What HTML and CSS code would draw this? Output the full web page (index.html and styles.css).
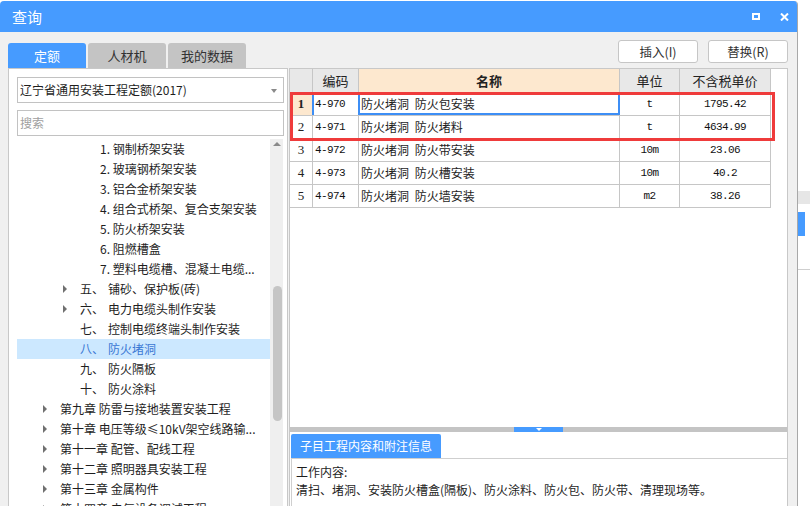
FILE: index.html
```html
<!DOCTYPE html>
<html lang="zh-CN">
<head>
<meta charset="utf-8">
<title>查询</title>
<link rel="stylesheet" href="styles.css">
</head>
<body>
<div class="screen">
  <div class="dialog">
    <div class="titlebar">
      <span class="title">查询</span>
      <div class="win-btns">
        <span class="max"></span>
        <svg class="close" width="9" height="8" viewBox="0 0 9 8"><path d="M1 0.5 L8 7.5 M8 0.5 L1 7.5" stroke="#fff" stroke-width="2"/></svg>
      </div>
    </div>
    <div class="toolbar">
      <div class="tabs">
        <div class="tab active">定额</div>
        <div class="tab">人材机</div>
        <div class="tab">我的数据</div>
      </div>
      <div class="actions">
        <button class="btn">插入(I)</button>
        <button class="btn">替换(R)</button>
      </div>
    </div>
    <div class="main">
      <div class="left">
        <div class="select">辽宁省通用安装工程定额(2017)<span class="caret"></span></div>
        <div class="search">搜索</div>
        <div class="tree-wrap">
          <ul class="tree">
            <li class="l3">1. 钢制桥架安装</li>
            <li class="l3">2. 玻璃钢桥架安装</li>
            <li class="l3">3. 铝合金桥架安装</li>
            <li class="l3">4. 组合式桥架、复合支架安装</li>
            <li class="l3">5. 防火桥架安装</li>
            <li class="l3">6. 阻燃槽盒</li>
            <li class="l3">7. 塑料电缆槽、混凝土电缆...</li>
            <li class="l2"><span class="arrow"></span><span class="num">五、</span>铺砂、保护板(砖)</li>
            <li class="l2"><span class="arrow"></span><span class="num">六、</span>电力电缆头制作安装</li>
            <li class="l2"><span class="noarrow"></span><span class="num">七、</span>控制电缆终端头制作安装</li>
            <li class="l2 selected"><span class="noarrow"></span><span class="num">八、</span>防火堵洞</li>
            <li class="l2"><span class="noarrow"></span><span class="num">九、</span>防火隔板</li>
            <li class="l2"><span class="noarrow"></span><span class="num">十、</span>防火涂料</li>
            <li class="l1"><span class="arrow"></span>第九章 防雷与接地装置安装工程</li>
            <li class="l1"><span class="arrow"></span>第十章 电压等级≤10kV架空线路输...</li>
            <li class="l1"><span class="arrow"></span>第十一章 配管、配线工程</li>
            <li class="l1"><span class="arrow"></span>第十二章 照明器具安装工程</li>
            <li class="l1"><span class="arrow"></span>第十三章 金属构件</li>
            <li class="l1"><span class="arrow"></span>第十四章 电气设备调试工程</li>
          </ul>
          <div class="scrollbar">
            <div class="up"><span></span></div>
            <div class="thumb"></div>
          </div>
        </div>
      </div>
      <div class="right">
        <div class="grid-area">
          <div class="grid">
            <div class="hc"></div>
            <div class="hc">编码</div>
            <div class="hc name-h">名称</div>
            <div class="hc">单位</div>
            <div class="hc">不含税单价</div>

            <div class="rn cur">1</div>
            <div class="c code">4-970</div>
            <div class="c name">防火堵洞 防火包安装</div>
            <div class="c mono center">t</div>
            <div class="c mono center">1795.42</div>

            <div class="rn">2</div>
            <div class="c code">4-971</div>
            <div class="c name">防火堵洞 防火堵料</div>
            <div class="c mono center">t</div>
            <div class="c mono center">4634.99</div>

            <div class="rn">3</div>
            <div class="c code">4-972</div>
            <div class="c name">防火堵洞 防火带安装</div>
            <div class="c mono center">10m</div>
            <div class="c mono center">23.06</div>

            <div class="rn">4</div>
            <div class="c code">4-973</div>
            <div class="c name">防火堵洞 防火槽安装</div>
            <div class="c mono center">10m</div>
            <div class="c mono center">40.2</div>

            <div class="rn">5</div>
            <div class="c code">4-974</div>
            <div class="c name">防火堵洞 防火墙安装</div>
            <div class="c mono center">m2</div>
            <div class="c mono center">38.26</div>
          </div>
          <div class="rowmark"></div>
          <div class="focus"></div>
          <div class="redbox"></div>
        </div>
        <div class="splitter"><span class="grip"><span class="down"></span></span></div>
        <div class="info-tabs"><span class="info-tab">子目工程内容和附注信息</span></div>
        <div class="info">
          <p>工作内容:</p>
          <p>清扫、堵洞、安装防火槽盒(隔板)、防火涂料、防火包、防火带、清理现场等。</p>
        </div>
      </div>
    </div>
  </div>
  <div class="bgapp">
    <div class="bg-head"></div>
    <div class="bg-row"><span class="bg-blue"></span></div>
  </div>
</div>
</body>
</html>
```

FILE: styles.css
```css
* { box-sizing: border-box; margin: 0; padding: 0; }
html, body { width: 810px; height: 506px; overflow: hidden; }
body {
  background: #ffffff;
  font-family: "Noto Sans CJK SC", "Microsoft YaHei", sans-serif;
  font-size: 12px;
  color: #1e1e1e;
}
.screen { display: flex; height: 506px; padding-top: 1px; }

.dialog {
  width: 798px;
  flex: none;
  display: flex;
  flex-direction: column;
  background: #f0f0f0;
  border-right: 1px solid #a8a8a8;
  border-radius: 4px 4px 0 0;
  overflow: hidden;
}

.titlebar {
  height: 31px;
  flex: none;
  background: #469bff;
  color: #fff;
  display: flex;
  align-items: center;
  justify-content: space-between;
  padding: 0 8px 0 12px;
}
.title { font-size: 15px; line-height: 20px; }
.win-btns { display: flex; align-items: center; gap: 20px; }
.max { width: 8px; height: 7px; border: 2px solid #fff; }
.close { display: block; }

.toolbar {
  height: 36px;
  flex: none;
  display: flex;
  justify-content: space-between;
  padding: 0 9px 0 8px;
}
.tabs { display: flex; gap: 2px; align-self: flex-end; }
.tab {
  width: 78px;
  height: 25px;
  line-height: 25px;
  text-align: center;
  font-size: 13px;
  color: #333;
  background: #c4c4c4;
  border-radius: 3px 3px 0 0;
}
.tab.active { background: #469bff; color: #fff; }
.actions { display: flex; gap: 10px; padding-top: 8px; }
.btn {
  width: 80px;
  height: 23px;
  background: #fff;
  border: 1px solid #c6c6c6;
  border-radius: 3px;
  font-family: "Noto Sans CJK SC", sans-serif;
  font-size: 12.5px;
  color: #333;
}

.main {
  flex: 1;
  min-height: 0;
  display: flex;
  gap: 1px;
  padding: 0 9px 0 8px;
}

/* left panel */
.left {
  width: 280px;
  flex: none;
  background: #fff;
  border: 1px solid #c8c8c8;
  border-bottom: none;
  padding: 8px 3px 0 8px;
  display: flex;
  flex-direction: column;
}
.select, .search {
  height: 26px;
  flex: none;
  border: 1px solid #c2c2c2;
  line-height: 24px;
  padding-left: 2px;
  position: relative;
}
.select { color: #1e1e1e; }
.caret {
  position: absolute;
  right: 6px;
  top: 11px;
  border-top: 4px solid #8a8a8a;
  border-left: 3px solid transparent;
  border-right: 3px solid transparent;
}
.search { margin-top: 7px; color: #a0a0a0; }

.tree-wrap { flex: 1; min-height: 0; display: flex; margin-top: 3px; }
.tree { width: 253px; list-style: none; overflow: hidden; }
.tree li {
  height: 20px;
  line-height: 20px;
  white-space: nowrap;
  overflow: hidden;
  display: flex;
  align-items: center;
  color: #1e1e1e;
}
.tree li.l1 { padding-left: 26px; }
.tree li.l2 { padding-left: 46px; }
.tree li.l3 { padding-left: 83px; }
.arrow, .noarrow { width: 17px; flex: none; height: 8px; }
.arrow {
  width: 0;
  margin-right: 13px;
  border-left: 4px solid #707070;
  border-top: 4px solid transparent;
  border-bottom: 4px solid transparent;
}
.num { display: inline-block; width: 28px; flex: none; }
.tree li.selected { background: #cce8ff; color: #3b78d4; }

.scrollbar { width: 13px; flex: none; background: #efefef; }
.up { height: 14px; display: flex; justify-content: center; padding-top: 3px; }
.up span {
  width: 0; height: 0;
  border-bottom: 4px solid #8a8a8a;
  border-left: 4px solid transparent;
  border-right: 4px solid transparent;
}
.thumb {
  width: 9px;
  height: 135px;
  margin: 133px 0 0 3px;
  background: #c5c5c5;
  border-radius: 5px;
}

/* right panel */
.right {
  width: 499px;
  flex: none;
  background: #fff;
  border: 1px solid #c8c8c8;
  border-bottom: none;
  display: flex;
  flex-direction: column;
}
.grid-area { height: 358px; flex: none; position: relative; }
.grid {
  display: grid;
  grid-template-columns: 23px 46px 261px 60px 91px;
  grid-template-rows: 24px;
  grid-auto-rows: 23px;
  width: 481px;
}
.grid > div {
  border-right: 1px solid #c6c6c6;
  border-bottom: 1px solid #c6c6c6;
  white-space: nowrap;
  overflow: hidden;
}
.hc {
  height: 24px;
  background: #e8e8e8;
  text-align: center;
  line-height: 23px;
  font-size: 13px;
  color: #222;
}
.hc.name-h { background: #fde8cf; font-weight: bold; }
.rn {
  text-align: center;
  font-family: "Liberation Serif", serif;
  font-size: 13px;
  line-height: 22px;
  color: #222;
}
.rn.cur { background: #fde8cf; font-weight: bold; }
.c { line-height: 22px; padding-left: 2px; }
.name { font-size: 12px; word-spacing: 3px; }
.code, .mono {
  font-family: "Liberation Mono", monospace;
  font-size: 11px;
  letter-spacing: -0.6px;
  color: #111;
}
.center { text-align: center; padding-left: 0; }

.rowmark {
  position: absolute;
  left: 22px;
  top: 24px;
  width: 2px;
  height: 22px;
  background: #3d8ef5;
}
.focus {
  position: absolute;
  left: 68px;
  top: 23px;
  width: 262px;
  height: 23px;
  border: 2px solid #3d8ef5;
}
.redbox {
  position: absolute;
  left: 0;
  top: 23px;
  width: 485px;
  height: 49px;
  border: 3px solid #ef3b3b;
}

.splitter {
  height: 5px;
  flex: none;
  background: #c4c4c4;
  display: flex;
  justify-content: center;
}
.grip {
  width: 49px;
  height: 5px;
  background: #469bff;
  display: flex;
  justify-content: center;
  padding-top: 1px;
}
.down {
  width: 0; height: 0;
  border-top: 3px solid #fff;
  border-left: 3px solid transparent;
  border-right: 3px solid transparent;
}
.info-tabs { flex: none; padding: 2px 0 0 1px; display: flex; }
.info-tab {
  height: 24px;
  line-height: 24px;
  padding: 0 9px;
  background: #469bff;
  color: #fff;
  font-size: 12px;
  border-radius: 2px 2px 0 0;
}
.info {
  flex: 1;
  margin-left: 1px;
  border-top: 1px solid #cfcfcf;
  border-left: 1px solid #cfcfcf;
  padding: 4px 4px;
  line-height: 18px;
  color: #1e1e1e;
}

/* background application peeking at the right */
.bgapp { flex: 1; background: #fff; padding-top: 190px; }
.bg-head { height: 13px; background: #e6e6e6; }
.bg-row { height: 58px; margin-top: 8px; border-bottom: 1px solid #cfcfcf; }
.bg-blue { display: block; width: 7px; height: 24px; background: #469bff; }
```
